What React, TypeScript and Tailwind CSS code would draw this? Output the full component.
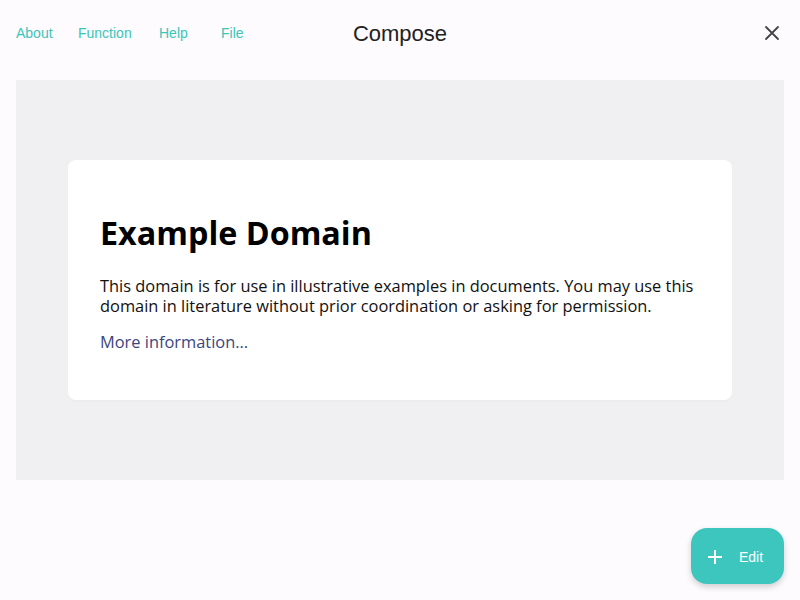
import React from 'react';

const App = () => {
  return (
    <div className="relative h-[600px] w-[800px] overflow-hidden bg-[#fdfbfd] font-['Liberation_Sans',Arial,sans-serif]">
      {/* top bar */}
      <div className="flex h-[66px] items-center px-4">
        <nav className="flex w-[300px] items-center text-[14px] text-[#3cc4b8]">
          <span className="w-[62px]">About</span>
          <span className="w-[81px]">Function</span>
          <span className="w-[62px]">Help</span>
          <span>File</span>
        </nav>
        <div className="flex-1 text-center text-[22px] text-[#222]">Compose</div>
        <div className="flex w-[300px] justify-end pr-1">
          <svg width="16" height="16" viewBox="0 0 16 16" className="text-[#444]">
            <path d="M2 2 L14 14 M14 2 L2 14" stroke="currentColor" strokeWidth="1.8" strokeLinecap="round" />
          </svg>
        </div>
      </div>

      {/* frame */}
      <div className="mx-4 mt-[14px] flex h-[400px] items-center justify-center bg-[#f0f0f2]">
        <div className="h-[240px] w-[664px] rounded-lg bg-white px-8 pt-[48px] font-['Open_Sans','Noto_Sans',sans-serif] shadow-[0_2px_3px_rgba(0,0,0,0.02)]">
          <h1 className="text-[32.3px] font-bold leading-[48px] text-black">Example Domain</h1>
          <p className="mt-[20px] text-[16.4px] leading-[20px] text-[#111]">
            This domain is for use in illustrative examples in documents. You may use this domain in literature without prior coordination or asking for permission.
          </p>
          <p className="mt-[16px] text-[16.4px] leading-[20px] text-[#3a4580]">More information...</p>
        </div>
      </div>

      {/* floating edit button */}
      <button className="absolute right-4 top-[528px] flex h-[56px] w-[93px] items-center gap-[16px] rounded-2xl bg-[#3cc6bd] pl-[16px] pt-[2px] text-[14px] text-white shadow-[0_3px_6px_rgba(0,0,0,0.18)]">
        <svg width="16" height="16" viewBox="0 0 16 16">
          <path d="M8 1 V15 M1 8 H15" stroke="white" strokeWidth="2" />
        </svg>
        <span>Edit</span>
      </button>
    </div>
  );
};

export default App;
